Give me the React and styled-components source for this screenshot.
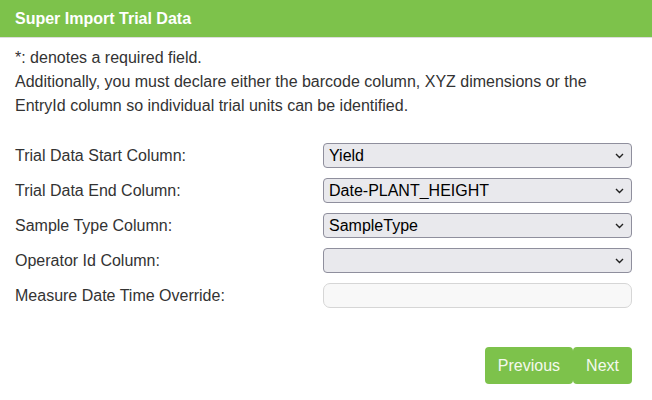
import React from 'react'
import styled, { createGlobalStyle } from 'styled-components'

const GlobalStyle = createGlobalStyle`
  body {
    margin: 0;
    background: #fff;
    font-family: "Liberation Sans", Arial, sans-serif;
  }
`

const rows = [
  { label: 'Trial Data Start Column:', value: 'Yield' },
  { label: 'Trial Data End Column:', value: 'Date-PLANT_HEIGHT' },
  { label: 'Sample Type Column:', value: 'SampleType' },
  { label: 'Operator Id Column:', value: '' },
]

const Chevron = () => (
  <ChevronIcon width="9" height="6" viewBox="0 0 9 6" aria-hidden="true">
    <path d="M1 1l3.5 3.5L8 1" fill="none" stroke="#222" strokeWidth="1.4" />
  </ChevronIcon>
)

const App = () => {
  return (
    <>
      <GlobalStyle />
      <Panel>
        <Header>Super Import Trial Data</Header>
        <Body>
          <Intro>
            <p>*: denotes a required field.</p>
            <p>
              Additionally, you must declare either the barcode column, XYZ dimensions or the
              EntryId column so individual trial units can be identified.
            </p>
          </Intro>

          <Form>
            {rows.map((r) => (
              <Row key={r.label}>
                <Label>{r.label}</Label>
                <SelectWrap>
                  <Select defaultValue={r.value}>
                    <option value={r.value}>{r.value}</option>
                  </Select>
                  <Chevron />
                </SelectWrap>
              </Row>
            ))}
            <Row>
              <Label>Measure Date Time Override:</Label>
              <TextInput type="text" />
            </Row>
          </Form>

          <Actions>
            <Button>Previous</Button>
            <Button>Next</Button>
          </Actions>
        </Body>
      </Panel>
    </>
  )
}

const Panel = styled.section`
  width: 652px;
  color: #333;
`

const Header = styled.h3`
  margin: 0;
  height: 37px;
  display: flex;
  align-items: center;
  padding: 0 15px;
  background: #7dc24b;
  border-bottom: 1px solid #ddd;
  color: #fff;
  font-size: 16px;
  font-weight: bold;
`

const Body = styled.div`
  padding: 8px 20px 0 15px;
`

const Intro = styled.div`
  font-size: 16px;
  line-height: 24px;

  p {
    margin: 0;
  }
`

const Form = styled.div`
  margin-top: 25px;
  display: flex;
  flex-direction: column;
  gap: 10px;
`

const Row = styled.div`
  display: grid;
  grid-template-columns: 308px 1fr;
  align-items: center;
`

const Label = styled.label`
  font-size: 16px;
  color: #333;
`

const SelectWrap = styled.div`
  position: relative;
  display: flex;
`

const Select = styled.select`
  appearance: none;
  width: 100%;
  height: 25px;
  font-family: "Liberation Sans", Arial, sans-serif;
  font-size: 16px;
  color: #000;
  background-color: #e9e9ed;
  border: 1px solid #8f8f9d;
  border-radius: 4px;
  padding: 0 24px 0 5px;
`

const ChevronIcon = styled.svg`
  position: absolute;
  right: 8px;
  top: 10px;
  pointer-events: none;
`

const TextInput = styled.input`
  height: 25px;
  box-sizing: border-box;
  font-size: 16px;
  background: #f8f8f8;
  border: 1px solid #d6d6d6;
  border-radius: 7px;
  padding: 0 6px;
`

const Actions = styled.div`
  margin-top: 39px;
  display: flex;
  justify-content: flex-end;
`

const Button = styled.button`
  height: 37px;
  padding: 0 13px;
  background: #7dc24b;
  border: none;
  border-radius: 4px;
  color: #f4f9ee;
  font-family: "Liberation Sans", Arial, sans-serif;
  font-size: 16px;
  cursor: pointer;
`

export default App
